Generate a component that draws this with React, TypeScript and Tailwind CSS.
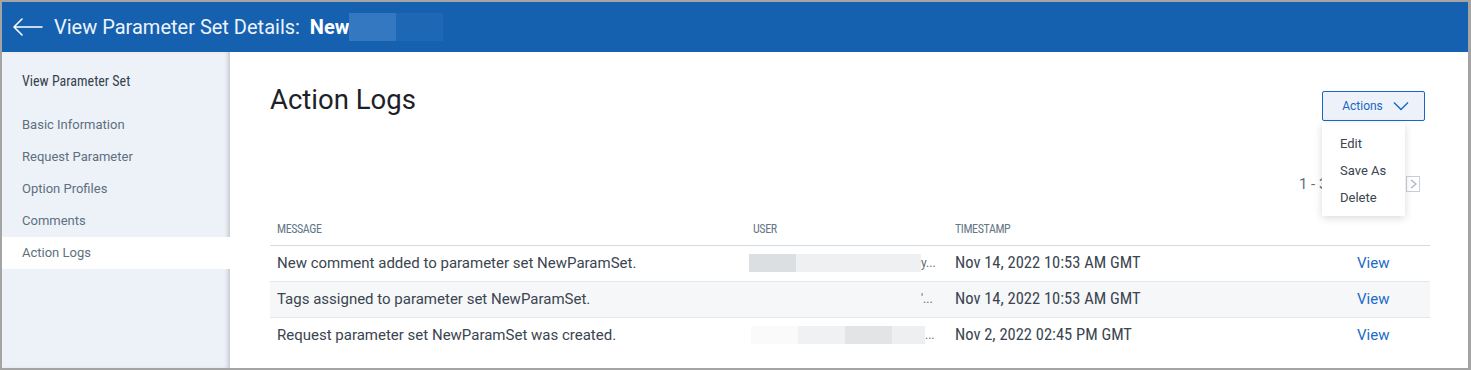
import React from 'react';

const condensed = { fontFamily: "'Roboto Condensed','Liberation Sans Narrow','DejaVu Sans Condensed',Roboto,sans-serif" };

const navItems = ['Basic Information', 'Request Parameter', 'Option Profiles', 'Comments', 'Action Logs'];

const rows = [
  { message: 'New comment added to parameter set NewParamSet.', time: 'Nov 14, 2022 10:53 AM GMT', blur: ['bg-[#dcdfe1] w-[47px]', 'bg-[#eff0f1] w-[125px]'], tail: 'y...' },
  { message: 'Tags assigned to parameter set NewParamSet.', time: 'Nov 14, 2022 10:53 AM GMT', blur: ['w-[172px]'], tail: "'..." },
  { message: 'Request parameter set NewParamSet was created.', time: 'Nov 2, 2022 02:45 PM GMT', blur: ['bg-[#fafafa] w-[47px] ml-[2px]', 'bg-[#f0f1f2] w-[47px]', 'bg-[#e2e4e5] w-[47px]', 'bg-[#eeeff0] w-[33px]'], tail: '...' },
];

const PageBox: React.FC<{ dir: 'prev' | 'next' }> = ({ dir }) => (
  <div className="w-[14px] h-[16px] border border-[#c7d0d8] flex items-center justify-center">
    <svg width="7" height="10" viewBox="0 0 7 10" fill="none" stroke="#a9b4be" strokeWidth="1.2">
      <path d={dir === 'next' ? 'M1 1L6 5L1 9' : 'M6 1L1 5L6 9'} />
    </svg>
  </div>
);

const App: React.FC = () => {
  return (
    <div className="w-[1471px] h-[370px] border-2 border-r-[3px] border-[#a4a4a4] flex flex-col bg-white overflow-hidden" style={{ fontFamily: "Roboto, 'Liberation Sans', sans-serif" }}>
      {/* Header */}
      <div className="h-[50px] shrink-0 bg-[#1561b0] flex items-center pl-[10px]">
        <svg width="32" height="20" viewBox="0 0 32 20" fill="none" stroke="#ffffff" strokeWidth="1.6" strokeLinecap="round" strokeLinejoin="round">
          <path d="M30 10H2M10 2L2 10L10 18" />
        </svg>
        <span className="ml-[10px] text-[20px] text-[#eef3fa] whitespace-pre">View Parameter Set Details:  </span>
        <span className="text-[20px] font-bold text-white">New</span>
        <div className="flex h-[28px]">
          <div className="w-[47px] bg-[#3478c2]" />
          <div className="w-[47px] bg-[#1e67b4]" />
        </div>
      </div>

      <div className="flex flex-1 min-h-0">
        {/* Sidebar */}
        <div className="w-[228px] shrink-0 bg-[#edf2f9] shadow-[inset_-4px_0_4px_-2px_rgba(0,0,0,0.18)]">
          <div className="pl-[20px] pt-[19px] h-[57px] text-[14px] leading-[20px] text-[#36424d]" style={condensed}>View Parameter Set</div>
          <div className="flex flex-col">
            {navItems.map((item) => (
              <div
                key={item}
                className={`h-[32px] flex items-center pl-[20px] text-[13px] text-[#5e6f7e] ${item === 'Action Logs' ? 'bg-white w-[228px]' : ''}`}
              >
                {item}
              </div>
            ))}
          </div>
        </div>

        {/* Main */}
        <div className="flex-1 pl-[40px] pr-[38px] relative">
          <div className="flex items-start justify-between pt-[32px]">
            <h1 className="text-[27.5px] text-[#1d2127] leading-[32px]">Action Logs</h1>
            <div className="relative mt-[7px] mr-[5px]">
              <button className="w-[103px] h-[30px] border-[1.5px] border-[#1a66c0] rounded-[2px] bg-[#edf2fa] text-[12px] text-[#1a66c0] flex items-center justify-center gap-[10px] pl-[4px]">
                Actions
                <svg width="16" height="10" viewBox="0 0 16 10" fill="none" stroke="#1a66c0" strokeWidth="1.4">
                  <path d="M1 1.5L8 8.5L15 1.5" />
                </svg>
              </button>
              <div className="absolute left-0 top-[32px] w-[83px] bg-white shadow-[0_2px_8px_rgba(0,0,0,0.15)] pt-[7px] pb-[5px] z-10">
                {['Edit', 'Save As', 'Delete'].map((a) => (
                  <div key={a} className="h-[27px] flex items-center pl-[18px] text-[13px] text-[#3a4550]">{a}</div>
                ))}
              </div>
            </div>
          </div>

          <div className="flex justify-end items-center h-[20px] mt-[53px] mr-[10px]">
            <span className="text-[15px] leading-[20px] text-[#5e6f7e] mr-[30px]">1 - 3 of 3</span>
            <div className="flex gap-[5px]">
              <PageBox dir="prev" />
              <PageBox dir="next" />
            </div>
          </div>

          <table className="w-full mt-[27px] border-collapse">
            <thead>
              <tr className="border-b border-[#d3dbe2] h-[24px] text-left">
                <th className="font-normal text-[12px] tracking-[-0.4px] text-[#667786] pl-[7px] w-[478px] align-top leading-[16px]" style={condensed}>MESSAGE</th>
                <th className="font-normal text-[12px] tracking-[-0.4px] text-[#667786] pl-[5px] w-[201px] align-top leading-[16px]" style={condensed}>USER</th>
                <th className="font-normal text-[12px] tracking-[-0.4px] text-[#667786] pl-[6px] align-top leading-[16px]" style={condensed}>TIMESTAMP</th>
                <th className="w-[90px]" />
              </tr>
            </thead>
            <tbody>
              {rows.map((r, i) => (
                <tr key={i} className={`h-[36px] ${i === 2 ? '' : 'border-b border-[#e3e8ed]'} ${i === 1 ? 'bg-[#f6f7f9]' : ''}`}>
                  <td className="pl-[7px] text-[15px] text-[#3a4550]">{r.message}</td>
                  <td className="pl-[1px]">
                    <div className="flex items-center h-[18px]">
                      {r.blur.map((b, j) => (
                        <div key={j} className={`h-[18px] ${b}`} />
                      ))}
                      <span className="text-[12px] text-[#5e6a75] leading-none">{r.tail}</span>
                    </div>
                  </td>
                  <td className="pl-[6px] text-[16.5px] text-[#3a4550]" style={condensed}>{r.time}</td>
                  <td className="text-[15px] text-[#1a6bc8] pl-[17px]">View</td>
                </tr>
              ))}
            </tbody>
          </table>
        </div>
      </div>
    </div>
  );
};

export default App;
